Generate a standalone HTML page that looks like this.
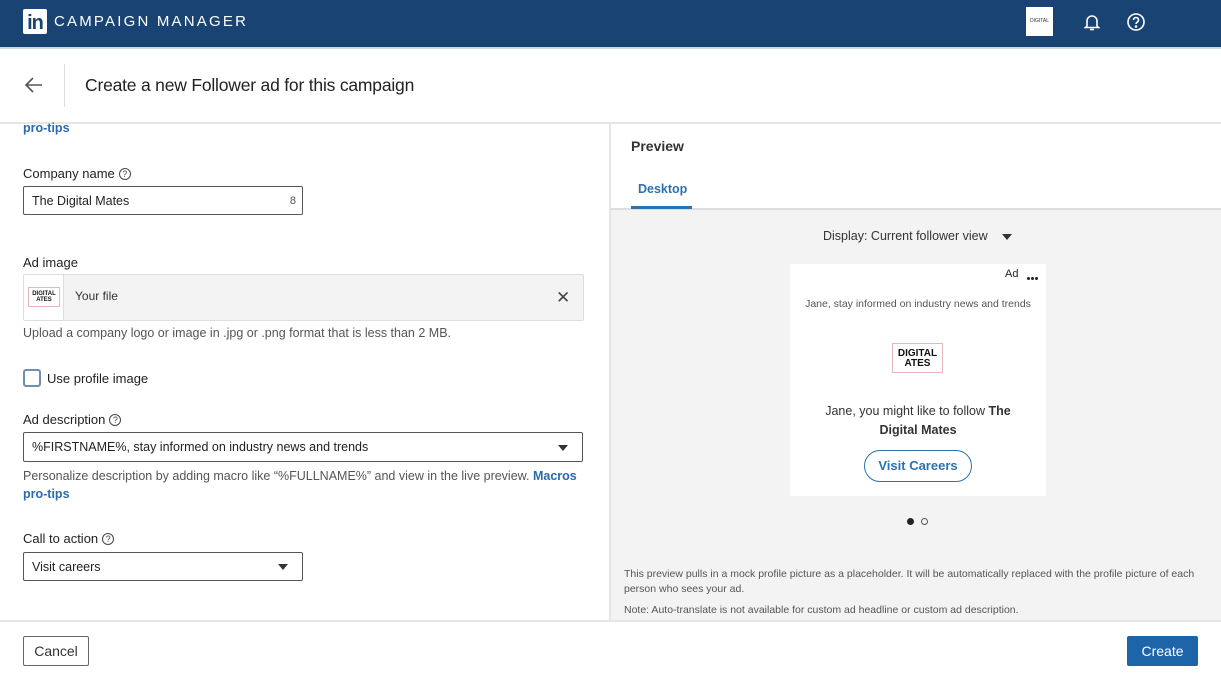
<!DOCTYPE html>
<html><head><meta charset="utf-8"><style>
*{box-sizing:border-box;margin:0;padding:0}
body{width:1221px;height:677px;position:relative;overflow:hidden;background:#fff;font-family:"Liberation Sans",Arial,sans-serif;color:#222}
.a{position:absolute}
.lbl{font-size:13px;color:#222}
.q{display:inline-block;width:12px;height:12px;border:1.3px solid #444;border-radius:50%;font-size:9px;text-align:center;line-height:10px;margin-left:4px;vertical-align:1px;color:#444}
.input{border:1px solid #555;border-radius:2px;font-size:12.5px;color:#222;padding-left:8px;display:flex;align-items:center}
.link{color:#2a6ab0;font-weight:bold;font-size:12.5px}
.tri{width:0;height:0;border-left:5.5px solid transparent;border-right:5.5px solid transparent;border-top:6px solid #333}
.logo{border:1px solid #e6b8b8;background:#fff;font-weight:bold;color:#111;text-align:center;line-height:1}
</style></head><body>
<div class="a" style="left:0;top:0;width:1221px;height:47px;background:#194373"></div>
<div class="a" style="left:0;top:47px;width:1221px;height:2px;background:#cfd6de"></div>
<div class="a" style="left:23px;top:9px;width:24px;height:25px;background:#fff;border-radius:2px;color:#194373;font-weight:bold;font-size:20px;line-height:28px;text-align:center;letter-spacing:-1px">in</div>
<div class="a" style="left:54px;top:13px;color:#fff;font-size:15px;letter-spacing:2.2px">CAMPAIGN MANAGER</div>
<div class="a" style="left:1026px;top:7px;width:27px;height:29px;background:#fff;font-size:5px;text-align:center;line-height:29px;color:#333">DIGITAL</div>
<svg class="a" style="left:1082px;top:12px" width="20" height="20" viewBox="0 0 20 20" fill="none" stroke="#fff" stroke-width="1.6"><path d="M5 14V9a5 5 0 0 1 10 0v5l1.5 1.5h-13z"/><path d="M8 17.5h4"/></svg>
<svg class="a" style="left:1126px;top:12px" width="20" height="20" viewBox="0 0 20 20" fill="none" stroke="#fff" stroke-width="1.6"><circle cx="10" cy="10" r="8"/><path d="M7.5 8a2.5 2.5 0 1 1 3.5 2.3c-.7.4-1 .8-1 1.7"/><circle cx="10" cy="14.5" r=".5" fill="#fff"/></svg>
<svg class="a" style="left:24px;top:76px" width="20" height="18" viewBox="0 0 20 18" fill="none" stroke="#555" stroke-width="1.6"><path d="M18 9H3M9 2L2 9l7 7"/></svg>
<div class="a" style="left:64px;top:64px;width:1px;height:43px;background:#ddd"></div>
<div class="a" style="left:85px;top:75px;font-size:17.5px;color:#222;letter-spacing:-0.2px">Create a new Follower ad for this campaign</div>
<div class="a" style="left:0;top:122px;width:1221px;height:2px;background:#e6e6e6"></div>
<div class="a link" style="left:23px;top:121px">pro-tips</div>
<div class="a lbl" style="left:23px;top:166px">Company name<span class="q">?</span></div>
<div class="a input" style="left:23px;top:186px;width:280px;height:29px">The Digital Mates<span style="position:absolute;right:6px;font-size:11px;color:#555">8</span></div>
<div class="a lbl" style="left:23px;top:255px">Ad image</div>
<div class="a" style="left:23px;top:274px;width:561px;height:47px;background:#f3f3f3;border:1px solid #ddd;border-radius:2px"></div>
<div class="a" style="left:24px;top:275px;width:40px;height:45px;background:#fff;border-right:1px solid #ddd"></div>
<div class="a logo" style="left:28px;top:287px;width:32px;height:20px;font-size:6px;padding-top:3px">DIGITAL<br>ATES</div>
<div class="a" style="left:75px;top:289px;font-size:12px;color:#333">Your file</div>
<div class="a" style="left:556px;top:288px;font-size:17px;color:#444">✕</div>
<div class="a" style="left:23px;top:326px;font-size:12.5px;color:#555">Upload a company logo or image in .jpg or .png format that is less than 2 MB.</div>
<div class="a" style="left:23px;top:369px;width:18px;height:18px;border:2px solid #6e8fb3;border-radius:3px;background:#fff"></div>
<div class="a lbl" style="left:47px;top:371px">Use profile image</div>
<div class="a lbl" style="left:23px;top:412px">Ad description<span class="q">?</span></div>
<div class="a input" style="left:23px;top:432px;width:560px;height:30px">%FIRSTNAME%, stay informed on industry news and trends<div class="tri" style="position:absolute;right:14px;top:12px"></div></div>
<div class="a" style="left:23px;top:467px;font-size:12.5px;color:#555;line-height:18px;width:560px">Personalize description by adding macro like “%FULLNAME%” and view in the live preview. <span class="link">Macros pro-tips</span></div>
<div class="a lbl" style="left:23px;top:531px">Call to action<span class="q">?</span></div>
<div class="a input" style="left:23px;top:552px;width:280px;height:29px">Visit careers<div class="tri" style="position:absolute;right:14px;top:11px"></div></div>
<div class="a" style="left:609px;top:124px;width:2px;height:496px;background:#e6e6e6"></div>
<div class="a" style="left:611px;top:210px;width:610px;height:410px;background:#f3f3f3"></div>
<div class="a" style="left:611px;top:208px;width:610px;height:2px;background:#ddd"></div>
<div class="a" style="left:631px;top:138px;font-size:14px;font-weight:bold;color:#333">Preview</div>
<div class="a" style="left:638px;top:182px;font-size:12.5px;color:#2a73b0;font-weight:bold">Desktop</div>
<div class="a" style="left:631px;top:206px;width:61px;height:3px;background:#2a73b0"></div>
<div class="a" style="left:823px;top:229px;font-size:12.5px;color:#333">Display: Current follower view</div>
<div class="a tri" style="left:1002px;top:234px"></div>
<div class="a" style="left:790px;top:264px;width:256px;height:232px;background:#fff"></div>
<div class="a" style="left:1005px;top:268px;font-size:11px;color:#222">Ad</div>
<div class="a" style="left:1027px;top:277px;width:3px;height:3px;border-radius:50%;background:#222;box-shadow:4px 0 #222,8px 0 #222"></div>
<div class="a" style="left:790px;top:298px;width:256px;text-align:center;font-size:10.5px;color:#555">Jane, stay informed on industry news and trends</div>
<div class="a logo" style="left:892px;top:343px;width:51px;height:30px;font-size:10px;padding-top:5px">DIGITAL<br>ATES</div>
<div class="a" style="left:790px;top:402px;width:256px;text-align:center;font-size:12.5px;line-height:19px;color:#333">Jane, you might like to follow <b>The<br>Digital Mates</b></div>
<div class="a" style="left:864px;top:450px;width:108px;height:32px;border:1.5px solid #2a73b0;border-radius:16px;text-align:center;line-height:29px;font-size:13px;font-weight:bold;color:#2a73b0">Visit Careers</div>
<div class="a" style="left:907px;top:518px;width:7px;height:7px;border-radius:50%;background:#222"></div>
<div class="a" style="left:921px;top:518px;width:7px;height:7px;border-radius:50%;border:1px solid #555"></div>
<div class="a" style="left:624px;top:567px;width:580px;font-size:10.5px;line-height:15px;color:#555">This preview pulls in a mock profile picture as a placeholder. It will be automatically replaced with the profile picture of each person who sees your ad.</div>
<div class="a" style="left:624px;top:604px;font-size:10.5px;color:#555">Note: Auto-translate is not available for custom ad headline or custom ad description.</div>
<div class="a" style="left:0;top:620px;width:1221px;height:2px;background:#e6e6e6"></div>
<div class="a" style="left:23px;top:636px;width:66px;height:30px;border:1px solid #666;border-radius:2px;text-align:center;line-height:28px;font-size:14px;color:#333">Cancel</div>
<div class="a" style="left:1127px;top:636px;width:71px;height:30px;background:#1e64a8;border-radius:2px;text-align:center;line-height:30px;font-size:14px;color:#fff">Create</div>
</body></html>
